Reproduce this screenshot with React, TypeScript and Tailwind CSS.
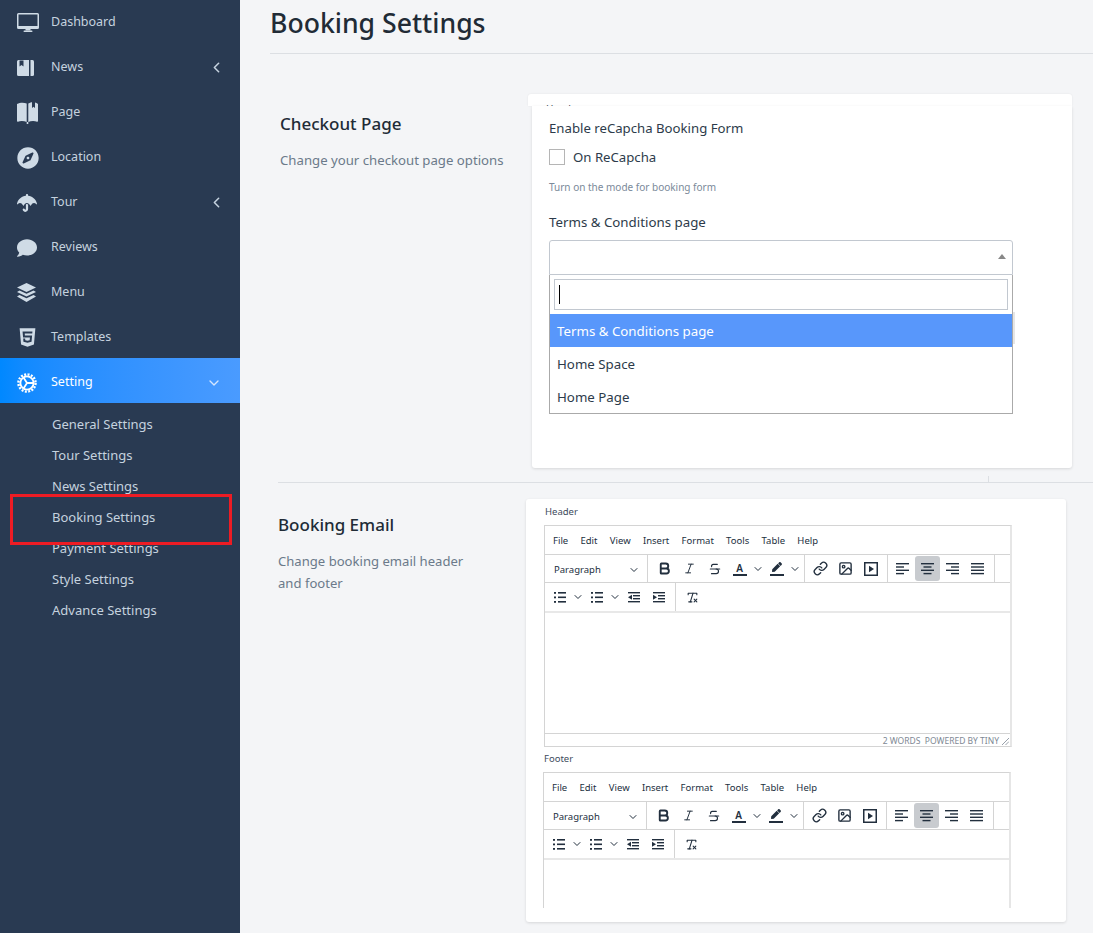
import {
  ChevronLeft,
  ChevronDown,
  Link as LinkIcon,
  Image as ImageIcon,
  Bold,
  Italic,
  Strikethrough,
  RemoveFormatting,
} from "lucide-react";
import { FaCompass, FaUmbrella, FaComment, FaHtml5, FaPen } from "react-icons/fa";

const FONT = "font-['Noto_Sans','Open_Sans',sans-serif]";

function MonitorIcon() {
  return (
    <svg width="22" height="19" viewBox="0 0 22 19" fill="currentColor">
      <path d="M0 1.5A1.5 1.5 0 0 1 1.5 0h19A1.5 1.5 0 0 1 22 1.5v13a1.5 1.5 0 0 1-1.5 1.5h-19A1.5 1.5 0 0 1 0 14.5zM1.5 1.5V13h19V1.5z" fillRule="evenodd" />
      <rect x="8.5" y="16" width="5" height="1.5" />
      <rect x="6.5" y="17.5" width="9" height="1.5" rx="0.7" />
    </svg>
  );
}

function NotebookIcon() {
  return (
    <svg width="17" height="16" viewBox="0 0 17 16" fill="currentColor">
      <path d="M1.5 0H12v16H1.5A1.5 1.5 0 0 1 0 14.5v-13A1.5 1.5 0 0 1 1.5 0z" />
      <path d="M13.5 0H15.5A1.5 1.5 0 0 1 17 1.5v13a1.5 1.5 0 0 1-1.5 1.5h-2z" />
      <path d="M2.5 0.5h4v6l-2-1.5-2 1.5z" fill="#293a52" />
    </svg>
  );
}

function PagesIcon() {
  return (
    <svg width="21" height="22" viewBox="0 0 21 22" fill="currentColor">
      <path d="M0 2C3 .3 7 .3 9.7 1.5V20C7 18.8 3 18.8 1 19.8 .4 20 0 19.6 0 19z" />
      <path d="M11.3 1.5C13 .6 14.5.3 15 .3V6l1.5-1.2L18 6V.5c1 .2 2 .7 3 1.5v17c0 .6-.4 1-1 .8-2.300-1-6-1-8.700.2z" />
      <path d="M9.700 20h1.600v2H9.700z" />
    </svg>
  );
}

function StackIcon() {
  return (
    <svg width="19" height="19" viewBox="0 0 19 19" fill="currentColor">
      <path d="M9.500 0L19 4.500 9.500 9 0 4.500z" />
      <path d="M2.500 7.600L9.500 10.800 16.500 7.600 19 9 9.500 13.500 0 9z" />
      <path d="M2.500 12.100L9.500 15.300 16.500 12.100 19 13.500 9.500 19 0 13.500z" />
    </svg>
  );
}

function GearIcon() {
  return (
    <svg width="20" height="20" viewBox="0 0 20 20" fill="none" stroke="currentColor">
      <circle cx="10" cy="10" r="8.600" strokeWidth="2.400" strokeDasharray="2 1.400" />
      <circle cx="10" cy="10" r="6.600" strokeWidth="1.800" />
      <path d="M10 10H16.500M10 10L6.500 4.500M10 10L6.500 15.500" strokeWidth="1.800" />
    </svg>
  );
}

const nav = [
  { label: "Dashboard", icon: <MonitorIcon /> },
  { label: "News", icon: <NotebookIcon />, arrow: true },
  { label: "Page", icon: <PagesIcon /> },
  { label: "Location", icon: <FaCompass size={22} /> },
  { label: "Tour", icon: <FaUmbrella size={20} />, arrow: true },
  { label: "Reviews", icon: <FaComment size={20} /> },
  { label: "Menu", icon: <StackIcon /> },
  { label: "Templates", icon: <FaHtml5 size={21} /> },
];

const subNav = [
  "General Settings",
  "Tour Settings",
  "News Settings",
  "Booking Settings",
  "Payment Settings",
  "Style Settings",
  "Advance Settings",
];

const menus = ["File", "Edit", "View", "Insert", "Format", "Tools", "Table", "Help"];

function Sidebar() {
  return (
    <aside className="w-[240px] h-[933px] shrink-0 bg-[#293a52] text-[#c5d2df] text-[12.500px]">
      <ul className="-mt-[2px]">
        {nav.map((item) => (
          <li key={item.label} className="flex items-center h-[45px] pt-[4px] pl-[17px] pr-[15px]">
            <span className="w-[34px] flex shrink-0 text-[#cfdbe6]">{item.icon}</span>
            <span className="flex-1">{item.label}</span>
            {item.arrow && <ChevronLeft size={17} strokeWidth={2.2} />}
          </li>
        ))}
        <li className="flex items-center h-[45px] pt-[4px] pl-[17px] pr-[18px] bg-gradient-to-r from-[#0088ff] to-[#4a9bff] text-white">
          <span className="w-[34px] flex shrink-0">
            <GearIcon />
          </span>
          <span className="flex-1">Setting</span>
          <ChevronDown size={16} className="text-[#d4e6ff]" />
        </li>
      </ul>
      <ul className="pt-[6px] pl-[52px] text-[13px] relative">
        {subNav.map((s) => (
          <li key={s} className="h-[31px] leading-[31px]">
            {s}
          </li>
        ))}
        <div className="absolute left-[10px] top-[91px] w-[222px] h-[51px] border-[3px] border-[#ed1c24]" />
      </ul>
    </aside>
  );
}

function Chevron() {
  return <ChevronDown size={12} className="text-[#222f3e] shrink-0" />;
}

function Btn({ children, active }: { children: React.ReactNode; active?: boolean }) {
  return (
    <span className={`w-[25px] h-[25px] shrink-0 flex items-center justify-center rounded-[3px] ${active ? "bg-[#c8cbcf]" : ""}`}>
      {children}
    </span>
  );
}

function AlignIcon({ kind }: { kind: "left" | "center" | "right" | "justify" }) {
  const short = kind === "justify" ? 13 : 8;
  const x = (w: number) => (kind === "center" ? (13 - w) / 2 : kind === "right" ? 13 - w : 0);
  return (
    <svg width="13" height="12" viewBox="0 0 13 12" fill="#222f3e">
      {[13, short, 13, short].map((w, i) => (
        <rect key={i} x={x(w)} y={i * 3.3} width={w} height="1.400" />
      ))}
    </svg>
  );
}

function ListIcon() {
  return (
    <svg width="12" height="11" viewBox="0 0 12 11" fill="#222f3e">
      {[0, 4.500, 9].map((y) => (
        <g key={y}>
          <rect x="0" y={y} width="2" height="1.800" />
          <rect x="4" y={y} width="8" height="1.600" />
        </g>
      ))}
    </svg>
  );
}

function IndentIcon({ out }: { out?: boolean }) {
  return (
    <svg width="12" height="11" viewBox="0 0 12 11" fill="#222f3e">
      <rect x="0" y="0" width="12" height="1.400" />
      <rect x="5" y="3" width="7" height="1.400" />
      <rect x="5" y="6" width="7" height="1.400" />
      <rect x="0" y="9" width="12" height="1.400" />
      {out ? <path d="M4 2.700v5L0 5.200z" /> : <path d="M0 2.700v5l4-2.500z" />}
    </svg>
  );
}

function MediaIcon() {
  return (
    <svg width="14" height="14" viewBox="0 0 14 14" fill="#222f3e">
      <path fillRule="evenodd" d="M0 0h14v14H0zM1.500 1.500v11h11v-11z" />
      <path d="M5 3.800v6.400L10 7z" />
    </svg>
  );
}

function ResizeHandle() {
  return (
    <svg width="7" height="7" viewBox="0 0 7 7" stroke="#7e8894" strokeWidth="0.800" className="absolute right-[1px] bottom-[1px]">
      <path d="M0 7L7 0M3.500 7L7 3.500" />
    </svg>
  );
}

function Editor({ label, height, cut }: { label: string; height: number; cut?: boolean }) {
  return (
    <div className="text-[#222f3e]">
      <div className="ml-[1px] mb-[6px] text-[9.500px] leading-[14px] text-[#3d4b5c]">{label}</div>
      <div className={`border-l border-t border-[#d4d4d4] border-r-2 border-r-[#e6e6e6] w-[468px] ${cut ? "border-b-0" : "border-b"}`}>
        <div className="flex items-center gap-[12.300px] h-[28px] pt-[2px] pl-[8px] text-[9.500px]">
          {menus.map((m) => (
            <span key={m}>{m}</span>
          ))}
        </div>
        <div className="flex items-center h-[29px] border-t border-b border-[#d4d4d4]">
          <div className="flex items-center justify-between w-[103px] pt-[3px] pl-[9px] pr-[7px] text-[9.500px] self-stretch border-r border-[#d4d4d4]">
            <span>Paragraph</span>
            <Chevron />
          </div>
          <div className="flex items-center w-[157px] pl-[4px] self-stretch border-r border-[#d4d4d4]">
            <Btn><Bold size={15} strokeWidth={3} /></Btn>
            <Btn><Italic size={13} strokeWidth={1.800} /></Btn>
            <Btn><Strikethrough size={14} /></Btn>
            <Btn>
              <span className="w-[14px] border-b-2 border-[#222f3e] text-[10px] leading-[12px] text-center font-semibold">A</span>
            </Btn>
            <Chevron />
            <Btn>
              <span className="w-[14px] h-[14px] border-b-2 border-[#222f3e] flex justify-center">
                <FaPen size={10} />
              </span>
            </Btn>
            <Chevron />
          </div>
          <div className="flex items-center w-[83px] pl-[3px] self-stretch border-r border-[#d4d4d4]">
            <Btn><LinkIcon size={15} strokeWidth={2.200} /></Btn>
            <Btn><ImageIcon size={15} strokeWidth={2.200} /></Btn>
            <Btn><MediaIcon /></Btn>
          </div>
          <div className="flex items-center w-[107px] pl-[2px] self-stretch border-r border-[#d4d4d4]">
            <Btn><AlignIcon kind="left" /></Btn>
            <Btn active><AlignIcon kind="center" /></Btn>
            <Btn><AlignIcon kind="right" /></Btn>
            <Btn><AlignIcon kind="justify" /></Btn>
          </div>
        </div>
        <div className="flex items-center h-[30px] border-b-2 border-[#e8e8e8]">
          <div className="flex items-center w-[131px] pl-[2px] self-stretch border-r border-[#d4d4d4]">
            <Btn><ListIcon /></Btn>
            <Chevron />
            <Btn><ListIcon /></Btn>
            <Chevron />
            <Btn><IndentIcon out /></Btn>
            <Btn><IndentIcon /></Btn>
          </div>
          <span className="ml-[4px]">
            <Btn><RemoveFormatting size={13} /></Btn>
          </span>
        </div>
        <div style={{ height }} />
        {!cut && (
          <div className="relative h-[13px] border-t border-[#d4d4d4] text-[8.500px] leading-[14px] text-right pr-[11px] text-[#7e8894]">
            2 WORDS&nbsp; POWERED BY TINY
            <ResizeHandle />
          </div>
        )}
      </div>
    </div>
  );
}

function CheckoutCard() {
  return (
    <div className="w-[544px] ml-[248px] shrink-0">
      <div className="h-[12px] bg-white rounded-t-[3px] w-[544px] overflow-hidden pl-[18px] pt-[8px] text-[10px] leading-[14px] text-[#3d4b5c] shadow-[0_0_2px_rgba(0,0,0,0.08)]">Header</div>
      <div className="relative ml-[4px] w-[540px] h-[362px] bg-white rounded-b-[3px] shadow-[0_1px_3px_rgba(0,0,0,0.12)] pl-[17px] pt-[13px]">
        <div className="text-[13.200px] leading-[18px] text-[#2d3b4a]">Enable reCapcha Booking Form</div>
        <label className="flex items-center mt-[11px] text-[13.200px] leading-[18px] text-[#2d3b4a]">
          <span className="w-[16px] h-[16px] border border-[#b5b5b5] mr-[8px]" />
          On ReCapcha
        </label>
        <div className="text-[10px] leading-[14px] mt-[14px] text-[#7b8a9a]">Turn on the mode for booking form</div>
        <div className="text-[13.300px] leading-[18px] mt-[19px] text-[#2d3b4a]">Terms &amp; Conditions page</div>
        <div className="relative w-[464px] mt-[9px]">
          <div className="relative h-[35px] border border-[#c2c8d0] rounded-t-[3px]">
            <span className="absolute right-[6px] top-[13px] w-0 h-0 border-x-[4px] border-x-transparent border-b-[5px] border-b-[#888888]" />
          </div>
          <div className="border border-t-0 border-[#aaaaaa]">
            <div className="p-[4px] h-[39px]">
              <div className="h-[31px] border border-[#c2c8d0] pl-[4px] flex items-center">
                <span className="w-px h-[19px] bg-black" />
              </div>
            </div>
            <div className="h-[33px] leading-[35px] px-[7px] bg-[#5897fb] text-white text-[13.300px]">Terms &amp; Conditions page</div>
            <div className="h-[33px] leading-[35px] px-[7px] text-[13.300px] text-[#2d3b4a]">Home Space</div>
            <div className="h-[33px] leading-[35px] px-[7px] text-[13.300px] text-[#2d3b4a]">Home Page</div>
          </div>
          <span className="absolute -right-[2px] top-[72px] w-[2px] h-[32px] bg-[#e6e6e6]" />
        </div>
      </div>
    </div>
  );
}

export default function App() {
  return (
    <div className={`flex w-[1093px] h-[933px] overflow-hidden bg-[#f4f5f7] ${FONT}`}>
      <Sidebar />
      <main className="flex-1 min-w-0">
        <div className="h-[54px] ml-[30px] border-b border-[#dcdfe3]">
          <h1 className="text-[26.600px] leading-[46px] font-medium text-[#212b36]">Booking Settings</h1>
        </div>
        <section className="relative flex pt-[40px] h-[429px] ml-[38px] border-b border-[#dcdfe3]">
          <div className="w-[2px] shrink-0" />
          <div className="w-0">
            <h2 className="mt-[19px] text-[17px] leading-[22px] font-medium text-[#212b36] whitespace-nowrap">Checkout Page</h2>
            <p className="mt-[14px] text-[13.200px] leading-[22px] text-[#6b7a8a] whitespace-nowrap">Change your checkout page options</p>
          </div>
          <CheckoutCard />
          <span className="absolute left-[710px] bottom-0 w-px h-[6px] bg-[#dcdfe3]" />
        </section>
        <section className="flex pt-[16px] ml-[38px]">
          <div className="w-[248px] shrink-0">
            <h2 className="mt-[15px] text-[17px] leading-[22px] font-medium text-[#212b36]">Booking Email</h2>
            <p className="mt-[14px] text-[13.100px] leading-[22px] text-[#6b7a8a]">
              Change booking email header
              <br />
              and footer
            </p>
          </div>
          <div className="w-[540px] h-[423px] overflow-hidden bg-white rounded-[3px] shadow-[0_1px_3px_rgba(0,0,0,0.12)] pl-[18px] pt-[6px]">
            <Editor label="Header" height={120} />
            <div className="mt-[5px] -ml-[1px]">
              <Editor label="Footer" height={48} cut />
            </div>
          </div>
        </section>
      </main>
    </div>
  );
}
